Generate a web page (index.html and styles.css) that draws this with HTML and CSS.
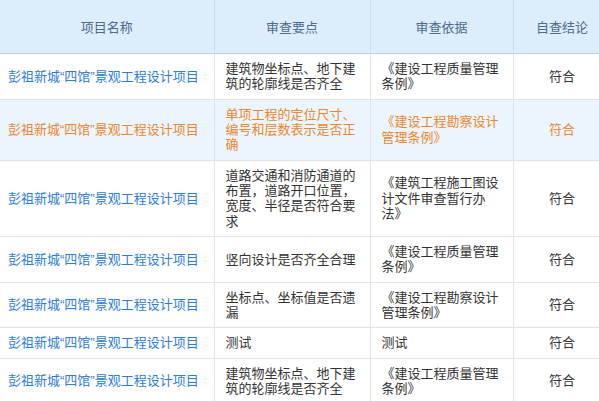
FILE: index.html
```html
<!DOCTYPE html>
<html lang="zh-CN">
<head>
<meta charset="utf-8">
<title>自查表</title>
<link rel="stylesheet" href="styles.css">
</head>
<body>
<table class="grid">
  <colgroup>
    <col class="c-name"><col class="c-point"><col class="c-basis"><col class="c-result">
  </colgroup>
  <thead>
    <tr>
      <th>项目名称</th>
      <th>审查要点</th>
      <th>审查依据</th>
      <th>自查结论</th>
    </tr>
  </thead>
  <tbody>
    <tr>
      <td class="name">彭祖新城“四馆”景观工程设计项目</td>
      <td class="point">建筑物坐标点、地下建筑的轮廓线是否齐全</td>
      <td class="basis">《建设工程质量管理条例》</td>
      <td class="result">符合</td>
    </tr>
    <tr class="active">
      <td class="name">彭祖新城“四馆”景观工程设计项目</td>
      <td class="point">单项工程的定位尺寸、编号和层数表示是否正确</td>
      <td class="basis">《建设工程勘察设计管理条例》</td>
      <td class="result">符合</td>
    </tr>
    <tr>
      <td class="name">彭祖新城“四馆”景观工程设计项目</td>
      <td class="point">道路交通和消防通道的布置，道路开口位置，宽度、半径是否符合要求</td>
      <td class="basis">《建筑工程施工图设计文件审查暂行办法》</td>
      <td class="result">符合</td>
    </tr>
    <tr>
      <td class="name">彭祖新城“四馆”景观工程设计项目</td>
      <td class="point">竖向设计是否齐全合理</td>
      <td class="basis">《建设工程质量管理条例》</td>
      <td class="result">符合</td>
    </tr>
    <tr>
      <td class="name">彭祖新城“四馆”景观工程设计项目</td>
      <td class="point">坐标点、坐标值是否遗漏</td>
      <td class="basis">《建设工程勘察设计管理条例》</td>
      <td class="result">符合</td>
    </tr>
    <tr>
      <td class="name">彭祖新城“四馆”景观工程设计项目</td>
      <td class="point">测试</td>
      <td class="basis">测试</td>
      <td class="result">符合</td>
    </tr>
    <tr>
      <td class="name">彭祖新城“四馆”景观工程设计项目</td>
      <td class="point">建筑物坐标点、地下建筑的轮廓线是否齐全</td>
      <td class="basis">《建设工程质量管理条例》</td>
      <td class="result">符合</td>
    </tr>
  </tbody>
</table>
</body>
</html>
```

FILE: styles.css
```css
html, body {
  margin: 0;
  padding: 0;
  background: #ffffff;
  overflow: hidden;
}

body {
  font-family: "Liberation Sans", "Noto Sans CJK SC", sans-serif;
  font-size: 13px;
  color: #333333;
}

.grid {
  border-collapse: collapse;
  table-layout: fixed;
  width: 611px;
}

.c-name { width: 214px; }
.c-point { width: 156px; }
.c-basis { width: 143px; }
.c-result { width: 98px; }

.grid th {
  height: 53px;
  padding: 0;
  background: #ddedfb;
  color: #4d6b8a;
  font-weight: normal;
  text-align: center;
  border-right: 1px solid #c9dff2;
  border-bottom: 1px solid #b9d5ee;
}

.grid td {
  padding: 7px 10px 7px 10px;
  line-height: 15.35px;
  vertical-align: middle;
  border-right: 1px solid #e3e3e3;
  border-bottom: 1px solid #e3e3e3;
  word-break: break-all;
}

.grid td.name {
  padding-left: 8px;
  padding-right: 4px;
  color: #2b7de0;
  white-space: nowrap;
}

.grid td.point {
  padding-left: 11px;
  padding-right: 10px;
}

.grid td.basis {
  padding-left: 11px;
  padding-right: 12px;
}

.grid td.result {
  text-align: center;
}

.grid tr.active td {
  background: #eaf5fe;
  color: #ef852a;
}
```
